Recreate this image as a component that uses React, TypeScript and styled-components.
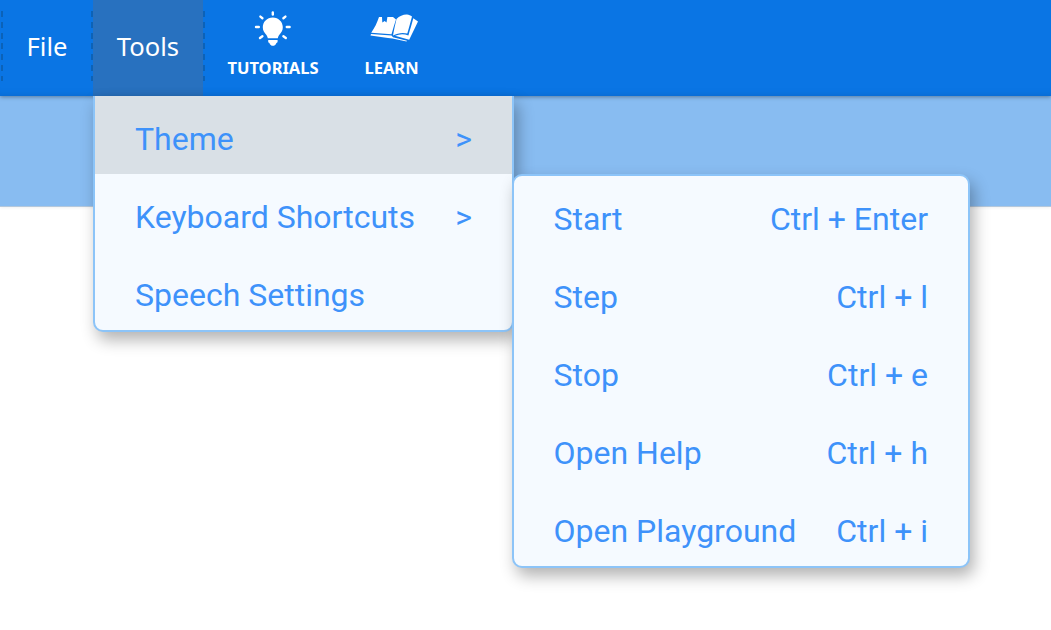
import React from "react";
import styled, { createGlobalStyle } from "styled-components";

const Global = createGlobalStyle`
  html, body { margin: 0; padding: 0; background: #fff; overflow: hidden; }
  #root { width: 1051px; height: 630px; overflow: hidden; }
`;

const Page = styled.div`
  width: 1051px;
  height: 630px;
  display: flex;
  flex-direction: column;
`;

const NavBar = styled.nav`
  height: 96px;
  flex: none;
  display: flex;
  align-items: stretch;
  background: #0a75e4;
  box-shadow: 0 1px 4px rgba(0, 0, 0, 0.35), inset 0 -8px 8px -8px rgba(0, 0, 0, 0.12);
  position: relative;
  z-index: 1;
  font-family: "Noto Sans", sans-serif;
  color: #fff;
`;

const MenuTab = styled.div<{ $open?: boolean; $width: number }>`
  width: ${(p) => p.$width}px;
  box-sizing: border-box;
  flex: none;
  position: relative;
  display: flex;
  align-items: center;
  justify-content: center;
  font-size: 25.6px;
  background: ${(p) => (p.$open ? "#2871bf" : "transparent")};
  box-shadow: ${(p) => (p.$open ? "inset 0 -8px 8px -8px rgba(0, 0, 0, 0.12)" : "none")};
  padding-bottom: 4px;
  padding-left: ${(p) => (p.$open ? 0 : 1)}px;
  margin-right: ${(p) => (p.$open ? 1 : 0)}px;
`;

const DashedEdge = styled.span<{ $offset: string }>`
  position: absolute;
  top: 11px;
  height: 70px;
  width: 2px;
  ${(p) => p.$offset};
  background: repeating-linear-gradient(
    to bottom,
    #0b62b8 0,
    #0b62b8 6px,
    transparent 6px,
    transparent 10.8px
  );
`;

const IconLink = styled.div<{ $width: number }>`
  width: ${(p) => p.$width}px;
  flex: none;
  display: flex;
  flex-direction: column;
  align-items: center;
  font-size: 16.5px;
  font-weight: 700;
  line-height: 20px;
  padding-top: 11px;
  box-sizing: border-box;
`;

const IconSlot = styled.div<{ $shift: number; $lift: number }>`
  height: 47px;
  display: flex;
  align-items: flex-start;
  justify-content: center;
  margin-left: ${(p) => p.$shift}px;
  margin-top: -${(p) => p.$lift}px;
  padding-bottom: ${(p) => p.$lift}px;
  box-sizing: content-box;
`;

const Band = styled.div`
  height: 111px;
  flex: none;
  background: #88bcf1;
  border-bottom: 1px solid #b4c8dc;
  box-shadow: 0 1px 3px rgba(0, 0, 0, 0.06);
  box-sizing: border-box;
`;

const Dropdown = styled.div<{ $x: number; $y: number; $w: number }>`
  position: absolute;
  left: ${(p) => p.$x}px;
  top: ${(p) => p.$y}px;
  width: ${(p) => p.$w}px;
  box-sizing: border-box;
  z-index: ${(p) => (p.$x > 200 ? 3 : 2)};
  background: #f5faff;
  border: 2px solid #8cc4f8;
  border-radius: 0 0 10px 10px;
  box-shadow: 4px 8px 16px rgba(0, 0, 0, 0.3);
  font-family: Roboto, sans-serif;
  font-size: 32px;
  color: #3e92fa;
`;

const SubDropdown = styled(Dropdown)`
  border-radius: 10px;
`;

const MainRow = styled.div<{ $active?: boolean }>`
  height: 78px;
  display: flex;
  align-items: center;
  justify-content: space-between;
  box-sizing: border-box;
  padding: 8px 40px 0;
  background: ${(p) => (p.$active ? "#d9e0e6" : "transparent")};
`;

const FirstRow = styled(MainRow)`
  margin-top: -2px;
  padding-top: 7px;
`;

const ShortcutRow = styled.div`
  height: 78px;
  display: flex;
  align-items: center;
  justify-content: space-between;
  box-sizing: border-box;
  padding: 8px 40px 0 39.5px;
`;

const Bulb = () => (
  <svg width="46" height="46" viewBox="250 6 46 46" fill="#fff">
    <path d="M272.8 17.4c-5.8 0-10 4.4-10 9.9 0 3.2 1.4 5.2 3 7 .9 1.1 1.7 2.3 2 4h10c.3-1.7 1.1-2.9 2-4 1.6-1.8 3-3.8 3-7 0-5.5-4.2-9.9-10-9.9z" />
    <path d="M268.2 40h9.4v1.6c0 .7-.5 1.2-1.2 1.4-.5 1.9-1.9 2.8-3.5 2.8s-3-.9-3.5-2.8c-.7-.2-1.2-.7-1.2-1.4z" />
    <g stroke="#fff" strokeWidth="2.4" strokeLinecap="round" fill="none">
      <path d="M272.8 12.4v2.2" />
      <path d="M260.4 16.6l2 1.6" />
      <path d="M285.4 16.6l-2 1.6" />
      <path d="M256 27h2.8" />
      <path d="M286.8 27h2.8" />
      <path d="M260 38l2.4-1.7" />
      <path d="M285.8 38l-2.4-1.7" />
    </g>
  </svg>
);

const Book = () => (
  <svg width="58" height="40" viewBox="366 8 58 40" fill="#fff">
    <path d="M379 17 L393 17 L396 19.5 C394.5 24 393 29 391.5 34.3 L371.2 32.8 C374.5 28 377.3 22.5 379 17z" />
    <path d="M396.5 19 C399.5 16 403.5 14.4 407 14.6 C409 14.8 410.5 15.6 412 16.6 C410.5 22 409 28 407.3 33.6 C403 32.2 397.5 33 393 35.6 C394 30 395.3 24 396.5 19z" />
    <path d="M413.3 18.2 L418 21.6 L409.2 39.8 L395 35.8 C399.5 33.8 404 33.8 408.4 35.4 C410 29.5 412 23.5 413.3 18.2z" />
    <path d="M371 34 L391.5 35.6 L393 37.2 L407 40.8 L406.5 41.6 L392.4 38.6 L388 38 L370.5 35.5z" />
    <path d="M382 17 h5.4 l-.9 5.6 -1.8-1.6 -2.4 1.6z" fill="#0a75e4" />
  </svg>
);

const shortcuts: [string, string][] = [
  ["Start", "Ctrl + Enter"],
  ["Step", "Ctrl + l"],
  ["Stop", "Ctrl + e"],
  ["Open Help", "Ctrl + h"],
  ["Open Playground", "Ctrl + i"],
];

export default function App() {
  return (
    <Page>
      <Global />
      <NavBar>
        <MenuTab $width={93}>
          <DashedEdge $offset="left: 1px" />
          File
        </MenuTab>
        <MenuTab $width={110} $open>
          <DashedEdge $offset="left: -2px" />
          <DashedEdge $offset="right: -2px" />
          Tools
        </MenuTab>
        <IconLink $width={138}>
          <IconSlot $shift={0} $lift={5}>
            <Bulb />
          </IconSlot>
          TUTORIALS
        </IconLink>
        <IconLink $width={99}>
          <IconSlot $shift={6} $lift={3}>
            <Book />
          </IconSlot>
          LEARN
        </IconLink>
      </NavBar>
      <Band />
      <Dropdown $x={93} $y={96} $w={421}>
        <FirstRow $active>
          Theme <span>&gt;</span>
        </FirstRow>
        <MainRow>
          Keyboard Shortcuts <span>&gt;</span>
        </MainRow>
        <MainRow>Speech Settings</MainRow>
      </Dropdown>
      <SubDropdown $x={512} $y={174} $w={458}>
        {shortcuts.map(([name, keys]) => (
          <ShortcutRow key={name}>
            <span>{name}</span>
            <span>{keys}</span>
          </ShortcutRow>
        ))}
      </SubDropdown>
    </Page>
  );
}
